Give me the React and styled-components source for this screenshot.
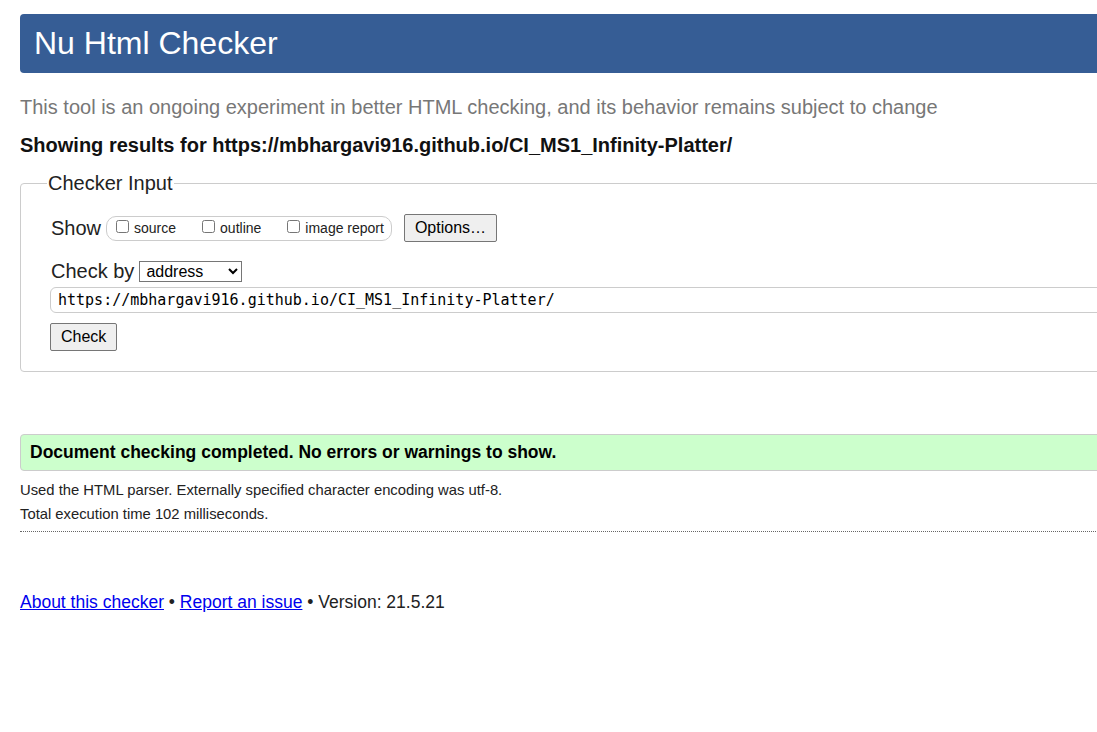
import React from 'react';
import styled, { createGlobalStyle } from 'styled-components';

const GlobalStyle = createGlobalStyle`
  html, body {
    margin: 0;
    padding: 0;
    background: #fff;
    overflow: hidden;
  }
  body {
    font-family: "Liberation Sans", Arial, sans-serif;
    color: #222;
  }
`;

const Page = styled.div`
  width: 1200px;
  padding: 14px 0 0 20px;
  box-sizing: border-box;
`;

const Header = styled.header`
  height: 59px;
  background: #365d95;
  border-radius: 4px;
  display: flex;
  align-items: center;
  padding-left: 14px;
`;

const Title = styled.h1`
  margin: 0;
  font-size: 32px;
  font-weight: normal;
  color: #fff;
`;

const Intro = styled.p`
  margin: 23px 0 0;
  font-size: 20px;
  line-height: 23px;
  color: #777;
`;

const ResultsFor = styled.p`
  margin: 15px 0 0;
  font-size: 20px;
  line-height: 23px;
  font-weight: bold;
  color: #111;
`;

const Fieldset = styled.fieldset`
  margin: 15px 0 0;
  padding: 19px 30px 20px 30px;
  border: 1px solid #ccc;
  border-radius: 4px;
  min-width: 0;
`;

const Legend = styled.legend`
  font-size: 20px;
  padding: 0 1px;
  margin-left: -4px;
  color: #222;
`;

const Row = styled.div`
  display: flex;
  align-items: center;
  gap: ${(p) => p.$gap || 0}px;
  margin-top: ${(p) => p.$mt || 0}px;
`;

const RowLabel = styled.span`
  font-size: 20px;
  color: #222;
`;

const Pill = styled.div`
  display: flex;
  align-items: center;
  gap: 24px;
  height: 23px;
  padding: 0 7px 0 7px;
  border: 1px solid #ccc;
  border-radius: 10px;
`;

const CheckLabel = styled.label`
  display: flex;
  align-items: center;
  font-size: 14px;
  color: #222;

  input {
    margin: 0 5px 3px 2px;
    width: 13px;
    height: 13px;
  }
`;

const Button = styled.button`
  font-family: "Liberation Sans", Arial, sans-serif;
  font-size: 16px;
  color: #000;
  background: #efefef;
  border: 1px solid #767676;
  border-radius: 2px;
  height: ${(p) => p.$h || 27}px;
  padding: 0 ${(p) => p.$px || 10}px;
  margin-left: ${(p) => p.$ml || 0}px;
`;

const Select = styled.select`
  font-family: "Liberation Sans", Arial, sans-serif;
  font-size: 16px;
  width: 103px;
  height: 21px;
  border: 1px solid #767676;
  border-radius: 0;
  background: #fff;
  color: #000;
  padding: 0 2px;
  margin-left: 5px;
`;

const UrlInput = styled.input`
  display: block;
  width: 1200px;
  height: 26px;
  box-sizing: border-box;
  margin: 4px 0 0 -1px;
  padding: 0 7px;
  border: 1px solid #ccc;
  border-radius: 6px;
  font-family: "DejaVu Sans Mono", "Liberation Mono", monospace;
  font-size: 15px;
  color: #000;
`;

const Success = styled.div`
  margin-top: 62px;
  height: 35px;
  display: flex;
  align-items: center;
  padding-left: 9px;
  background: #ccffcc;
  border: 1px solid #ccc;
  border-radius: 4px;
  font-size: 17.5px;
  font-weight: bold;
  color: #000;
`;

const Details = styled.div`
  padding: 7px 0 5px;
  border-bottom: 1px dotted #666;
`;

const Detail = styled.p`
  margin: 0;
  font-size: 14.8px;
  line-height: 24px;
  color: #222;
`;

const Footer = styled.p`
  margin: 60px 0 0;
  font-size: 17.5px;
  color: #222;

  a {
    color: #00e;
    text-decoration: underline;
  }
`;

export default function App() {
  return (
    <>
      <GlobalStyle />
      <Page>
        <Header>
          <Title>Nu Html Checker</Title>
        </Header>
        <Intro>
          This tool is an ongoing experiment in better HTML checking, and its behavior remains subject to change
        </Intro>
        <ResultsFor>Showing results for https://mbhargavi916.github.io/CI_MS1_Infinity-Platter/</ResultsFor>
        <Fieldset>
          <Legend>Checker Input</Legend>
          <Row $gap={5}>
            <RowLabel>Show</RowLabel>
            <Pill>
              <CheckLabel><input type="checkbox" />source</CheckLabel>
              <CheckLabel><input type="checkbox" />outline</CheckLabel>
              <CheckLabel><input type="checkbox" />image report</CheckLabel>
            </Pill>
            <Button $h={28} $ml={7} $px={10}>Options…</Button>
          </Row>
          <Row $mt={18}>
            <RowLabel>Check by</RowLabel>
            <Select defaultValue="address">
              <option value="address">address</option>
              <option value="file">file upload</option>
              <option value="text">text input</option>
            </Select>
          </Row>
          <UrlInput defaultValue="https://mbhargavi916.github.io/CI_MS1_Infinity-Platter/" readOnly />
          <Row $mt={10}>
            <Button $h={28} $px={10} $ml={-1}>Check</Button>
          </Row>
        </Fieldset>
        <Success>Document checking completed. No errors or warnings to show.</Success>
        <Details>
          <Detail>Used the HTML parser. Externally specified character encoding was utf-8.</Detail>
          <Detail>Total execution time 102 milliseconds.</Detail>
        </Details>
        <Footer>
          <a href="#about">About this checker</a> • <a href="#report">Report an issue</a> • Version: 21.5.21
        </Footer>
      </Page>
    </>
  );
}
